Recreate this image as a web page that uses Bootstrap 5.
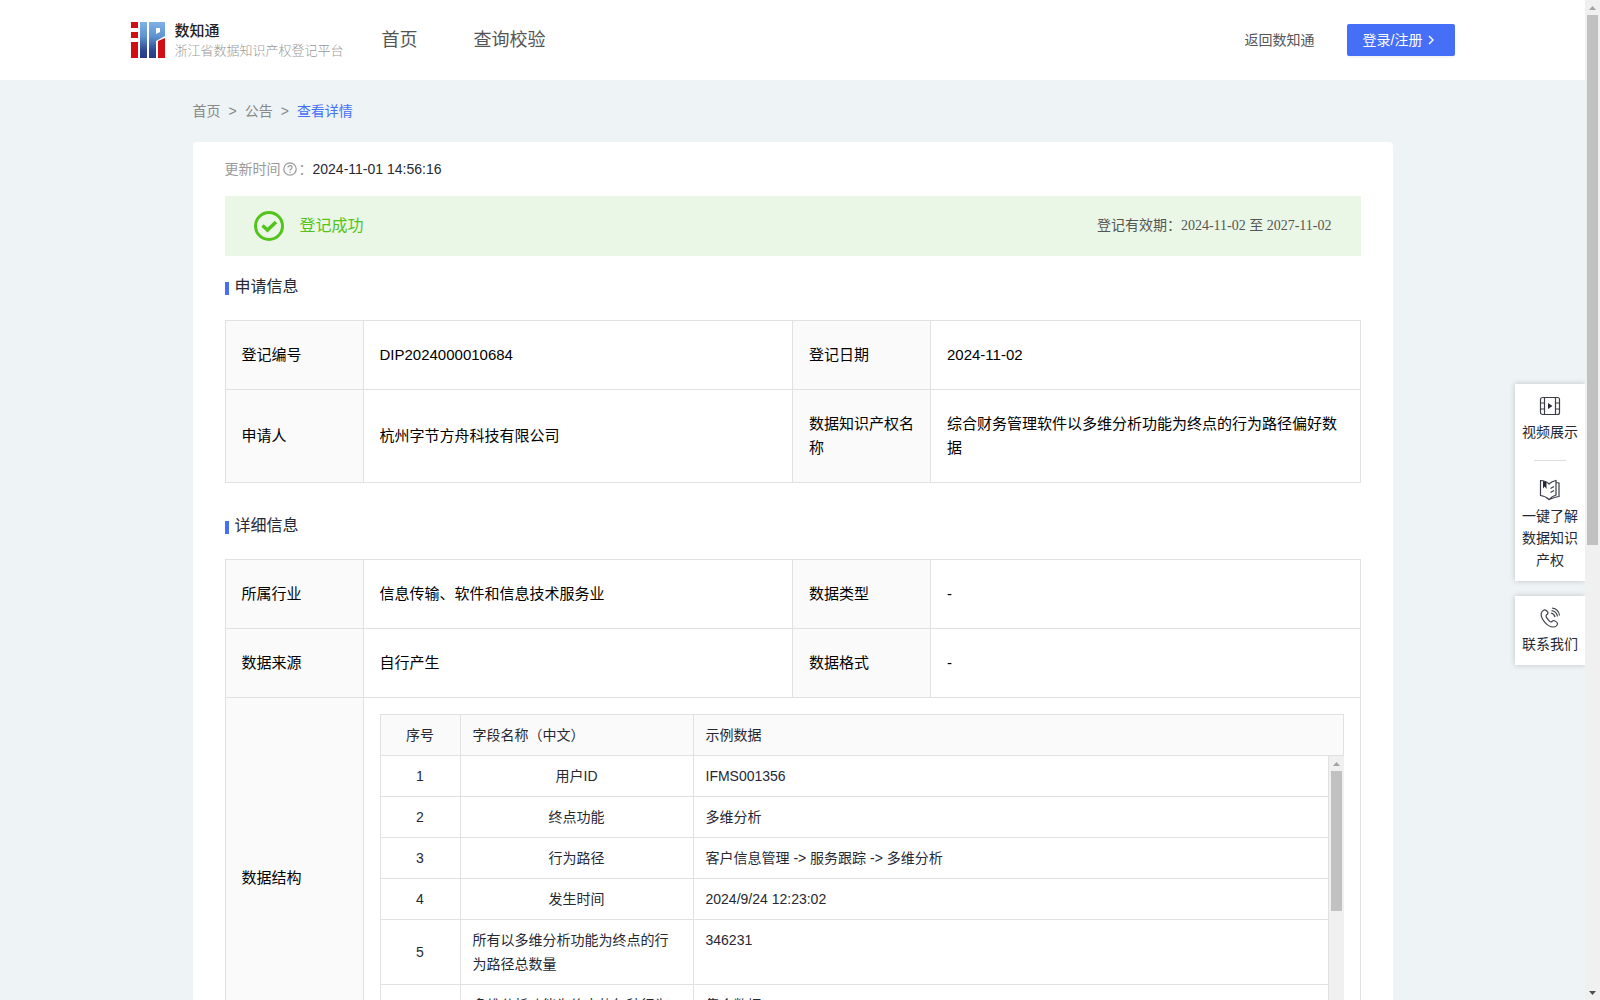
<!DOCTYPE html>
<html lang="zh-CN">
<head>
<meta charset="utf-8">
<meta name="viewport" content="width=device-width, initial-scale=1">
<title>数知通 - 查看详情</title>
<link href="https://cdn.jsdelivr.net/npm/bootstrap@5.3.0/dist/css/bootstrap.min.css" rel="stylesheet">
<style>
body{font-family:"Liberation Sans","Noto Sans CJK SC",sans-serif;font-size:14px;line-height:24px;color:#262833;background:#eef3f6;font-weight:400}
a{text-decoration:none}
.page-view{overflow:hidden}
.topbar{height:80px}
.topbar-inner{max-width:1324px}
.brand-link{gap:10px}
.brand-name{font-size:15px;line-height:20px;font-weight:500;color:#222}
.brand-sub{font-size:13px;line-height:19px;color:#999;font-weight:300}
.main-nav{gap:56px;margin-left:38px;font-size:18px}
.main-nav a,.back-link{color:#555}
.login-btn{--bs-btn-bg:#456ff6;--bs-btn-color:#fff;--bs-btn-hover-bg:#3560e8;--bs-btn-hover-color:#fff;--bs-btn-padding-x:15px;--bs-btn-padding-y:3px;--bs-btn-font-size:14px;--bs-btn-line-height:24px;--bs-btn-border-radius:2px;--bs-btn-border-color:transparent;width:108px;box-shadow:0 2px 0 rgba(0,0,0,.04)}
.detail-wrap{width:100%;max-width:1200px}
.breadcrumb{--bs-breadcrumb-divider:">";--bs-breadcrumb-margin-bottom:0;--bs-breadcrumb-font-size:14px;--bs-breadcrumb-divider-color:#888;--bs-breadcrumb-item-padding-x:8px;padding:19px 0}
.breadcrumb a{color:#888}
.breadcrumb .active{color:#456ff6}
.detail-card{border-radius:4px;padding:15px 32px 32px}
.muted-label{color:#999;gap:2px}
.result-bar{height:60px;margin-top:15px;padding:0 29px;background:#ebf7e6}
.result-text{font-size:16px;color:#52c41a}
.valid-text{font-family:"Liberation Serif","Noto Sans CJK SC",serif;color:#555}
.section-title{font-size:16px;line-height:24px;margin:19px 0 21px;font-weight:400;gap:6px}
.section-title::before{content:"";width:4px;height:13px;background:#456ff6;margin-top:3px}
.info-table,.field-table{border-collapse:collapse;width:100%;table-layout:fixed}
.info-table{font-size:15px;color:#000;margin-bottom:31px}
.info-table>tbody>tr>th,.info-table>tbody>tr>td{border:1px solid #e1e1e1;padding:22px 16px}
.info-table>tbody>tr>.nest-cell{padding:16px}
.info-table>tbody>tr>th{background:#fafafa;font-weight:400}
.field-table{font-size:14px;color:#262833}
.field-table th,.field-table td{border:1px solid #e1e1e1;padding:8px 12px;font-weight:400;vertical-align:top}
.field-table th{background:#fafafa}
.field-scroll{height:286px;overflow:hidden}
.field-scroll .field-table tr:first-child td{border-top:0}
.bar-track{width:15px;background:#f0f0f0}
.bar-thumb{width:11px;background:#c1c1c1}
.inner-thumb{height:140px}
.page-thumb{height:530px}
.arrow-box{height:15px}
.side-tools{top:384px;gap:15px;width:70px}
.side-group{box-shadow:0 0 6px rgba(0,0,0,.2)}
.side-group a{color:#262833;line-height:22px;padding:11px 6px 10px}
.side-rule{width:32px;height:1px;background:#ddd;margin:7px 0}
</style>
</head>
<body>
<div class="d-flex vh-100 overflow-hidden">
<div class="page-view flex-grow-1 position-relative">
<header class="topbar bg-white">
<div class="topbar-inner h-100 mx-auto d-flex align-items-center">
<a href="#" class="brand-link d-flex align-items-center" aria-label="数知通">
<svg width="34" height="36" viewBox="0 0 34 36" aria-hidden="true"><defs><linearGradient id="blueFade" x1="0" y1="0" x2="0" y2="1"><stop offset="0" stop-color="#7fb2e6"/><stop offset=".4" stop-color="#5e93d0"/><stop offset=".8" stop-color="#2c4692"/><stop offset="1" stop-color="#263a85"/></linearGradient></defs><path fill="#d00f14" d="M0 0h7v6H0zM0 10h7v6H0zM0 20h7v16H0zM27 19l7-3v20h-7z"/><path fill="url(#blueFade)" d="M9 0h7v36H9zM18 0h16v14l-9 5v17h-7zM25 6v6l4-2V6z" fill-rule="evenodd"/></svg>
<span><span class="d-block brand-name">数知通</span><span class="d-block brand-sub">浙江省数据知识产权登记平台</span></span>
</a>
<nav class="main-nav d-flex"><a href="#">首页</a><a href="#">查询校验</a></nav>
<a href="#" class="back-link ms-auto me-4 pe-2">返回数知通</a>
<button type="button" class="btn login-btn d-flex align-items-center text-nowrap">登录/注册<svg class="ms-1" width="10" height="10" viewBox="0 0 10 10" fill="none" stroke="#fff" stroke-width="1.4" aria-hidden="true"><path d="M3 1l4 4-4 4"/></svg></button>
</div>
</header>
<main class="detail-wrap mx-auto">
<nav aria-label="breadcrumb"><ol class="breadcrumb"><li class="breadcrumb-item"><a href="#">首页</a></li><li class="breadcrumb-item"><a href="#">公告</a></li><li class="breadcrumb-item active" aria-current="page">查看详情</li></ol></nav>
<div class="detail-card bg-white">
<div class="d-flex align-items-center"><span class="muted-label d-flex align-items-center">更新时间<svg width="14" height="14" viewBox="0 0 14 14" fill="none" stroke="#999" stroke-width="1.2" aria-hidden="true"><circle cx="7" cy="7" r="6.2"/><path d="M5 5.600C5 3 9 3.200 9 5.500 9 7 7 6.800 7 8.500M7 9.600v1.200"/></svg>：</span><span>2024-11-01 14:56:16</span></div>
<div class="result-bar d-flex align-items-center">
<svg width="30" height="30" viewBox="0 0 30 30" fill="none" stroke="#52c41a" aria-hidden="true"><circle cx="15" cy="15" r="13.500" stroke-width="3"/><path d="M8.500 14.500l5 4.500 8.500-8" stroke-width="3.500"/></svg>
<span class="result-text ms-3">登记成功</span><span class="valid-text ms-auto">登记有效期：2024-11-02 至 2027-11-02</span>
</div>
<h2 class="section-title d-flex align-items-center">申请信息</h2>
<table class="info-table"><colgroup><col style="width:138px"><col><col style="width:138px"><col></colgroup><tbody>
<tr><th scope="row">登记编号</th><td>DIP2024000010684</td><th scope="row">登记日期</th><td>2024-11-02</td></tr>
<tr><th scope="row">申请人</th><td>杭州字节方舟科技有限公司</td><th scope="row">数据知识产权名称</th><td>综合财务管理软件以多维分析功能为终点的行为路径偏好数据</td></tr>
</tbody></table>
<h2 class="section-title d-flex align-items-center">详细信息</h2>
<table class="info-table"><colgroup><col style="width:138px"><col><col style="width:138px"><col></colgroup><tbody>
<tr><th scope="row">所属行业</th><td>信息传输、软件和信息技术服务业</td><th scope="row">数据类型</th><td>-</td></tr>
<tr><th scope="row">数据来源</th><td>自行产生</td><th scope="row">数据格式</th><td>-</td></tr>
<tr><th scope="row">数据结构</th><td class="nest-cell" colspan="3">
<table class="field-table"><colgroup><col style="width:80px"><col style="width:233px"><col></colgroup><thead><tr><th class="text-center">序号</th><th>字段名称（中文）</th><th>示例数据</th></tr></thead></table>
<div class="field-scroll d-flex">
<div class="flex-grow-1"><table class="field-table"><colgroup><col style="width:80px"><col style="width:233px"><col></colgroup><tbody>
<tr><td class="text-center align-middle">1</td><td class="text-center">用户ID</td><td>IFMS001356</td></tr>
<tr><td class="text-center align-middle">2</td><td class="text-center">终点功能</td><td>多维分析</td></tr>
<tr><td class="text-center align-middle">3</td><td class="text-center">行为路径</td><td>客户信息管理 -&gt; 服务跟踪 -&gt; 多维分析</td></tr>
<tr><td class="text-center align-middle">4</td><td class="text-center">发生时间</td><td>2024/9/24 12:23:02</td></tr>
<tr><td class="text-center align-middle">5</td><td>所有以多维分析功能为终点的行为路径总数量</td><td>346231</td></tr>
<tr><td class="text-center align-middle">6</td><td>多维分析功能为终点的每种行为路径集合</td><td>集合数据X</td></tr>
</tbody></table></div>
<div class="bar-track d-flex flex-column align-items-center flex-shrink-0" aria-hidden="true"><span class="arrow-box d-flex align-items-center"><svg width="7" height="4" viewBox="0 0 7 4"><path fill="#a3a3a3" d="M0 4L3.500 0 7 4z"/></svg></span><span class="bar-thumb inner-thumb"></span></div>
</div>
</td></tr>
</tbody></table>
</div>
</main>
<aside class="side-tools position-absolute end-0 d-flex flex-column text-center">
<div class="side-group bg-white d-flex flex-column align-items-center">
<a href="#"><svg class="d-block mx-auto mb-1" width="22" height="22" viewBox="0 0 22 22" fill="none" stroke="#3b3d49" stroke-width="1.200" aria-hidden="true"><rect x="1.500" y="2.500" width="19" height="17" rx="2"/><path d="M5.500 2.500v17M16.500 2.500v17M1.500 8h4M1.500 14h4M16.500 8h4M16.500 14h4"/><path d="M9 8l4.500 3L9 14z" fill="#262833" stroke="none"/></svg>视频展示</a>
<span class="side-rule"></span>
<a href="#"><svg class="d-block mx-auto mb-1" width="22" height="22" viewBox="0 0 22 22" fill="none" stroke="#3b3d49" stroke-width="1.200" aria-hidden="true"><path d="M10 5C8 3 5 1.500 1.500 1.500v15c4 .5 6.500 2 8.500 4 2-2.500 4-3.500 7-4.500V1.500C14 2 12 3 10 5zM17 3.500l3 .5v13.500c-4 .5-6 1.500-10 3M11.500 9.500l3.500-2M11.500 13.500l3.500-2"/><path d="M4 2v7.500l1.700-2L7.500 10V3z" fill="#262833" stroke="none"/></svg>一键了解数据知识产权</a>
</div>
<div class="side-group bg-white">
<a href="#" class="d-block"><svg class="d-block mx-auto mb-1" width="22" height="22" viewBox="0 0 22 22" fill="none" stroke="#3b3d49" stroke-width="1.200" aria-hidden="true"><path d="M5 3C2 4.500 1 8 3.500 12c3 5 6.500 8 10.500 8 3 0 4.500-2 4.500-3.500 0-1-3-3-4-3s-1.500 1.500-2.500 1.500S7 10.500 7 9s2-1.500 2-3S6.500 2.300 5 3zM12 6c2 .5 3.500 2 4 4M12.500 3.500c3 .5 5.500 3 6 6M13 1c4 .5 7 3.500 7.500 7.500"/></svg>联系我们</a>
</div>
</aside>
</div>
<div class="bar-track d-flex flex-column align-items-center flex-shrink-0" aria-hidden="true"><span class="arrow-box d-flex align-items-center"><svg width="7" height="4" viewBox="0 0 7 4"><path fill="#a3a3a3" d="M0 4L3.500 0 7 4z"/></svg></span><span class="bar-thumb page-thumb"></span><span class="arrow-box d-flex align-items-center mt-auto"><svg width="7" height="4" viewBox="0 0 7 4"><path fill="#505050" d="M0 0h7L3.500 4z"/></svg></span></div>
</div>
<script src="https://cdn.jsdelivr.net/npm/bootstrap@5.3.0/dist/js/bootstrap.bundle.min.js"></script>
</body>
</html>
